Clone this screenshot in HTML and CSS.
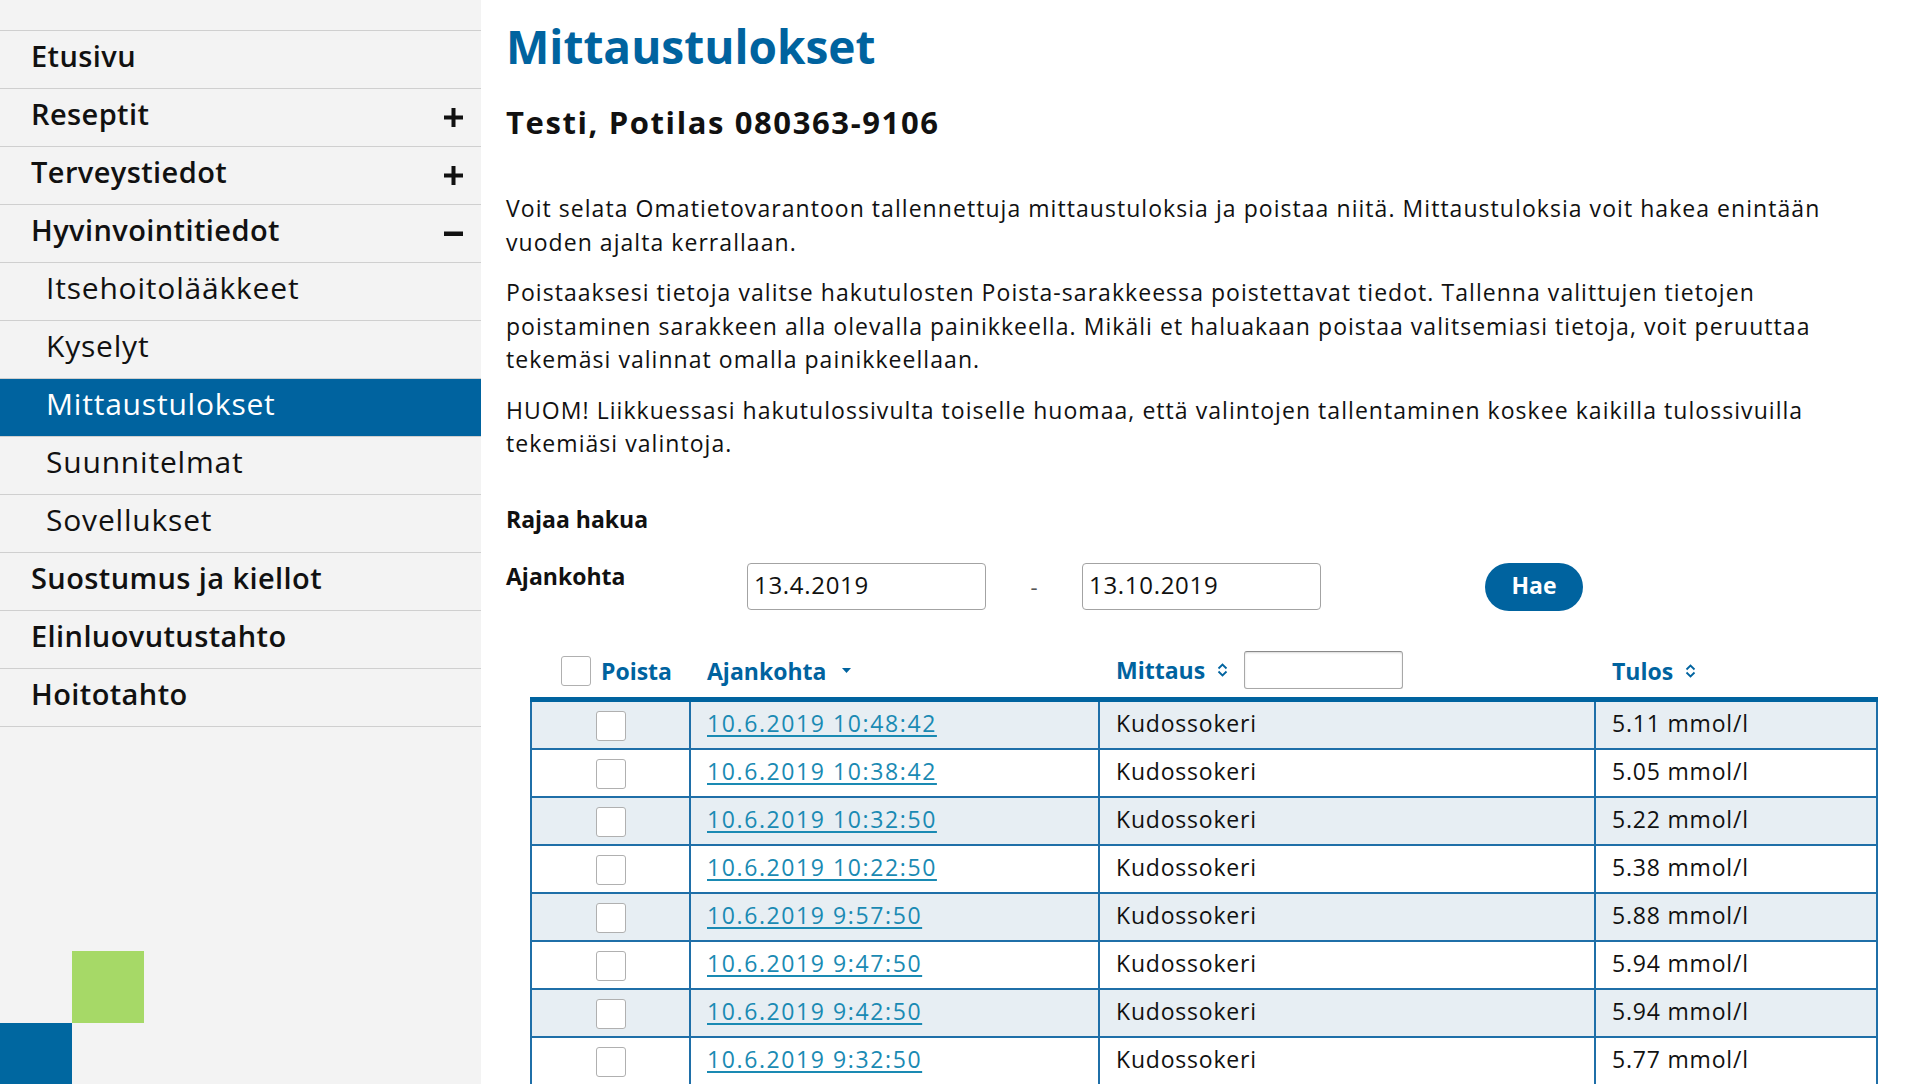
FILE: index.html
```html
<!DOCTYPE html>
<html lang="fi">
<head>
<meta charset="utf-8">
<title>Mittaustulokset</title>
<link rel="stylesheet" href="styles.css">
</head>
<body>
<div class="page">
  <aside class="sidebar">
    <nav class="nav">
      <a class="nav-item" href="#">Etusivu</a>
      <a class="nav-item" href="#">Reseptit
        <svg class="toggle" width="19" height="19" viewBox="0 0 19 19"><path d="M0 7.5h19v4H0z M7.5 0h4v19h-4z"/></svg></a>
      <a class="nav-item" href="#">Terveystiedot
        <svg class="toggle" width="19" height="19" viewBox="0 0 19 19"><path d="M0 7.5h19v4H0z M7.5 0h4v19h-4z"/></svg></a>
      <a class="nav-item" href="#">Hyvinvointitiedot
        <svg class="toggle" width="19" height="19" viewBox="0 0 19 19"><path d="M0 7.5h19v4.5H0z"/></svg></a>
      <a class="nav-item sub" href="#">Itsehoitolääkkeet</a>
      <a class="nav-item sub" href="#">Kyselyt</a>
      <a class="nav-item sub active" href="#">Mittaustulokset</a>
      <a class="nav-item sub" href="#">Suunnitelmat</a>
      <a class="nav-item sub" href="#">Sovellukset</a>
      <a class="nav-item" href="#">Suostumus ja kiellot</a>
      <a class="nav-item" href="#">Elinluovutustahto</a>
      <a class="nav-item" href="#">Hoitotahto</a>
    </nav>
    <div class="brand">
      <span class="sq sq-green"></span>
      <span class="sq sq-blue"></span>
    </div>
  </aside>

  <main class="content">
    <h1 class="title">Mittaustulokset</h1>
    <h2 class="patient">Testi, Potilas 080363-9106</h2>

    <div class="intro">
      <p>Voit selata Omatietovarantoon tallennettuja mittaustuloksia ja poistaa niitä. Mittaustuloksia voit hakea enintään vuoden ajalta kerrallaan.</p>
      <p>Poistaaksesi tietoja valitse hakutulosten Poista-sarakkeessa poistettavat tiedot. Tallenna valittujen tietojen poistaminen sarakkeen alla olevalla painikkeella. Mikäli et haluakaan poistaa valitsemiasi tietoja, voit peruuttaa tekemäsi valinnat omalla painikkeellaan.</p>
      <p>HUOM! Liikkuessasi hakutulossivulta toiselle huomaa, että valintojen tallentaminen koskee kaikilla tulossivuilla tekemiäsi valintoja.</p>
    </div>

    <h3 class="filter-title">Rajaa hakua</h3>
    <div class="filter-row">
      <span class="filter-label">Ajankohta</span>
      <input class="date-input" type="text" value="13.4.2019">
      <span class="dash">-</span>
      <input class="date-input" type="text" value="13.10.2019">
      <button class="search-btn" type="button">Hae</button>
    </div>

    <table class="results">
      <colgroup>
        <col class="c-del"><col class="c-time"><col class="c-meas"><col class="c-res">
      </colgroup>
      <thead>
        <tr>
          <th class="th-del"><span class="th-group"><input type="checkbox" class="cb"><span>Poista</span></span></th>
          <th><span class="th-group">Ajankohta <svg class="caret" width="9" height="5" viewBox="0 0 9 5"><path d="M0 0h9L4.5 5z"/></svg></span></th>
          <th><span class="th-group">Mittaus <svg class="sort" width="11" height="14" viewBox="0 0 11 14"><path d="M1.5 5.5L5.5 1.5L9.5 5.5M1.5 8.5L5.5 12.5L9.5 8.5"/></svg><input class="col-filter" type="text"></span></th>
          <th><span class="th-group">Tulos <svg class="sort" width="11" height="14" viewBox="0 0 11 14"><path d="M1.5 5.5L5.5 1.5L9.5 5.5M1.5 8.5L5.5 12.5L9.5 8.5"/></svg></span></th>
        </tr>
      </thead>
      <tbody>
        <tr><td class="td-del"><input type="checkbox" class="cb"></td><td><a href="#">10.6.2019 10:48:42</a></td><td>Kudossokeri</td><td>5.11 mmol/l</td></tr>
        <tr><td class="td-del"><input type="checkbox" class="cb"></td><td><a href="#">10.6.2019 10:38:42</a></td><td>Kudossokeri</td><td>5.05 mmol/l</td></tr>
        <tr><td class="td-del"><input type="checkbox" class="cb"></td><td><a href="#">10.6.2019 10:32:50</a></td><td>Kudossokeri</td><td>5.22 mmol/l</td></tr>
        <tr><td class="td-del"><input type="checkbox" class="cb"></td><td><a href="#">10.6.2019 10:22:50</a></td><td>Kudossokeri</td><td>5.38 mmol/l</td></tr>
        <tr><td class="td-del"><input type="checkbox" class="cb"></td><td><a href="#">10.6.2019 9:57:50</a></td><td>Kudossokeri</td><td>5.88 mmol/l</td></tr>
        <tr><td class="td-del"><input type="checkbox" class="cb"></td><td><a href="#">10.6.2019 9:47:50</a></td><td>Kudossokeri</td><td>5.94 mmol/l</td></tr>
        <tr><td class="td-del"><input type="checkbox" class="cb"></td><td><a href="#">10.6.2019 9:42:50</a></td><td>Kudossokeri</td><td>5.94 mmol/l</td></tr>
        <tr><td class="td-del"><input type="checkbox" class="cb"></td><td><a href="#">10.6.2019 9:32:50</a></td><td>Kudossokeri</td><td>5.77 mmol/l</td></tr>
      </tbody>
    </table>
  </main>
</div>
</body>
</html>
```
FILE: styles.css
```css
* { box-sizing: border-box; }
html, body { margin: 0; padding: 0; overflow: hidden; }
body {
  font-family: "Open Sans", "DejaVu Sans", sans-serif;
  color: #111;
  background: #fff;
}

.page { display: flex; min-height: 1084px; }

/* Sidebar */
.sidebar {
  flex: 0 0 481px;
  width: 481px;
  background: #f3f3f3;
  padding-top: 30px;
}
.nav { border-top: 1px solid #cfcfcf; }
.nav-item {
  display: flex;
  justify-content: space-between;
  align-items: flex-start;
  height: 58px;
  padding: 0 18px 7px 31px;
  line-height: 50px;
  border-bottom: 1px solid #cfcfcf;
  font-size: 29px;
  font-weight: 600;
  letter-spacing: 0.4px;
  color: #111;
  text-decoration: none;
}
.nav-item.sub {
  padding-left: 46px;
  font-size: 30px;
  font-weight: 400;
  letter-spacing: 0.8px;
}
.nav-item.active { background: #00639f; color: #fff; }
.toggle { margin-top: 19px; fill: #111; flex: 0 0 auto; }

.brand {
  margin-top: 224px;
  display: grid;
  grid-template-columns: 72px 72px;
  grid-template-rows: 72px 72px;
}
.sq-green { grid-column: 2; grid-row: 1; background: #a6d967; }
.sq-blue { grid-column: 1; grid-row: 2; background: #0067a0; }

/* Content */
.content { flex: 1; padding: 18px 42px 0 25px; }
.title {
  margin: 0;
  font-size: 46px;
  line-height: 56px;
  font-weight: 700;
  color: #00639f;
}
.patient {
  margin: 28px 0 0;
  font-size: 31px;
  line-height: 40px;
  font-weight: 700;
  letter-spacing: 1.6px;
}
.intro { margin-top: 50px; max-width: 1355px; }
.intro p {
  margin: 0;
  font-size: 23px;
  line-height: 33.5px;
  letter-spacing: 1.05px;
}
.intro p + p { margin-top: 17px; }

.filter-title {
  margin: 43px 0 0;
  font-size: 23px;
  line-height: 30px;
  font-weight: 700;
}
.filter-row { display: flex; align-items: flex-start; margin-top: 29px; }
.filter-label {
  width: 241px;
  font-size: 23px;
  line-height: 26px;
  font-weight: 700;
}
.date-input {
  width: 239px;
  height: 47px;
  border: 1px solid #a3a3a3;
  border-radius: 4px;
  padding: 0 6px 4px;
  font-family: "Open Sans", "DejaVu Sans", sans-serif;
  font-size: 24px;
  letter-spacing: 0.7px;
  color: #111;
  background: #fff;
}
.dash {
  width: 96px;
  text-align: center;
  line-height: 47px;
  font-size: 22px;
  color: #555;
}
.search-btn {
  margin-left: 164px;
  width: 98px;
  height: 48px;
  padding: 0 0 4px;
  border: 0;
  border-radius: 24px;
  background: #00639f;
  color: #fff;
  font-family: "Open Sans", "DejaVu Sans", sans-serif;
  font-size: 23px;
  font-weight: 700;
}

/* Table */
.results {
  margin: 32px 0 0 24px;
  width: 1348px;
  table-layout: fixed;
  border-collapse: separate;
  border-spacing: 0;
  font-size: 23px;
}
.c-del { width: 161px; }
.c-time { width: 409px; }
.c-meas { width: 496px; }
.c-res { width: 282px; }

.results th {
  height: 59px;
  padding: 0 0 0 16px;
  border-bottom: 5px solid #00639f;
  text-align: left;
  vertical-align: middle;
  font-weight: 700;
  color: #00639f;
  white-space: nowrap;
}
.results th.th-del { text-align: center; padding-left: 12px; }
.th-group { display: inline-flex; align-items: center; gap: 12px; vertical-align: middle; }
.th-del .th-group { gap: 10px; }
.caret { fill: #00639f; margin-left: 4px; }
.sort path { fill: none; stroke: #00639f; stroke-width: 1.8; }
.col-filter {
  width: 159px;
  height: 38px;
  margin-left: 4px;
  border: 1px solid #a8a8a8;
  border-top-color: #8a8a8a;
  border-radius: 3px;
  box-shadow: inset 0 1px 2px rgba(0,0,0,0.15);
  background: #fff;
}

.results td {
  height: 48px;
  padding: 0 16px 3px;
  border-right: 2px solid #1f6fa8;
  border-bottom: 2px solid #1f6fa8;
  vertical-align: middle;
  white-space: nowrap;
  letter-spacing: 0.8px;
}
.results td:first-child { border-left: 2px solid #1f6fa8; }
.results tbody tr:nth-child(odd) td { background: #e7eef3; }
.results td.td-del { text-align: center; padding: 0; }
.results a {
  color: #1a8ab3;
  text-decoration: underline;
  text-underline-offset: 3px;
  letter-spacing: 1.6px;
}

.cb {
  -webkit-appearance: none;
  appearance: none;
  display: inline-block;
  width: 30px;
  height: 30px;
  margin: 0;
  border: 1.5px solid #b0b0b0;
  border-radius: 3px;
  background: #fff;
  vertical-align: middle;
}
```
